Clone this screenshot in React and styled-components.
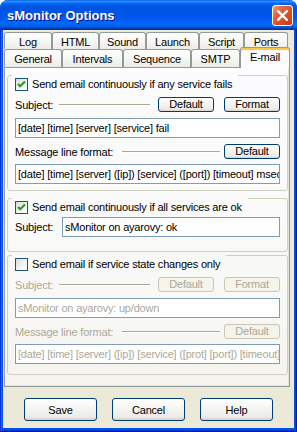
import styled, { createGlobalStyle } from 'styled-components'

const GlobalStyle = createGlobalStyle`
  html, body {
    margin: 0;
    padding: 0;
    background: #ffffff;
  }
  body {
    font-family: "Liberation Sans", Arial, sans-serif;
    font-size: 11px;
    letter-spacing: -0.2px;
    color: #000;
  }
`

// the tab page gradient is pinned to the viewport so covering patches blend in
const pageFill = `
  background: linear-gradient(#fcfcfe 67px, #f8f8f6 300px, #f4f3ee 386px);
  background-attachment: fixed;
`

const Window = styled.div`
  width: 297px;
  height: 432px;
  display: flex;
  flex-direction: column;
  border-radius: 8px 8px 0 0;
  overflow: hidden;
  background: #0054e3;
`

const TitleBar = styled.div`
  flex: none;
  height: 30px;
  display: flex;
  align-items: center;
  justify-content: space-between;
  padding: 0 4px 0 7px;
  box-sizing: border-box;
  background: linear-gradient(180deg, #0058ee 0%, #3593ff 4%, #288eff 6%, #127dff 8%, #036ffc 10%, #0262ee 14%, #0057e5 20%, #0054e3 24%, #0055eb 56%, #005bf5 66%, #026afe 76%, #0062ef 86%, #0052d6 92%, #0040ab 94%, #003092 100%);
`

const Title = styled.span`
  color: #fff;
  font: bold 13px "Liberation Sans", Arial, sans-serif;
  letter-spacing: 0;
  text-shadow: 1px 1px #0f1089;
  padding-top: 1px;
`

const CloseButton = styled.div`
  width: 21px;
  height: 21px;
  box-sizing: border-box;
  border: 1px solid #fff;
  border-radius: 3px;
  background: linear-gradient(135deg, #f4a283 0%, #e5653f 30%, #dc4f24 60%, #c8380f 100%);
  display: flex;
  align-items: center;
  justify-content: center;
  margin-top: 1px;
`

const Frame = styled.div`
  flex: 1;
  display: flex;
  padding: 0 3px 4px 3px;
  box-shadow: inset 1px 0 #0831d9, inset -1px 0 #001ea0, inset 0 -1px #00138c, inset 2px 0 #166aee, inset -2px 0 #003bda, inset 0 -2px #003bda;
`

const Client = styled.div`
  flex: 1;
  background: #ece9d8;
  display: flex;
  flex-direction: column;
  padding-top: 2px;
`

const TabStrip = styled.div`
  display: flex;
  flex-direction: column;
  margin-left: 1px;
`

const TabRow = styled.div`
  display: flex;
  align-items: flex-end;
  height: ${p => p.$h}px;
`

const Tab = styled.div`
  box-sizing: border-box;
  width: ${p => p.$w}px;
  height: ${p => p.$h}px;
  border: 1px solid #919b9c;
  border-bottom: none;
  border-radius: 3px 3px 0 0;
  background: linear-gradient(#ffffff, #f7f7f4 50%, #ecebe6);
  display: flex;
  align-items: center;
  justify-content: center;
  padding-top: 1px;
  white-space: nowrap;

  &.active {
    position: relative;
    z-index: 2;
    height: ${p => p.$h + 3}px;
    margin-bottom: -1px;
    border-top-color: #e68b2c;
    box-shadow: inset 0 2px #ffc73c;
    padding-top: 0;
    padding-bottom: 2px;
    ${pageFill}
  }
`

const Panel = styled.div`
  box-sizing: border-box;
  width: 286px;
  height: 320px;
  margin-left: 1px;
  border: 1px solid #919b9c;
  box-shadow: inset -1px -1px 0 #e6e4da;
  ${pageFill}
  padding: 0 1px 0 2px;
  display: flex;
  flex-direction: column;
`

const Group = styled.div`
  margin-top: ${p => p.$mt}px;
  border: 1px solid #d0d0bf;
  border-radius: 3px;
  padding: 0 7px ${p => p.$pb}px 7px;
  display: flex;
  flex-direction: column;
`

const Caption = styled.label`
  align-self: flex-start;
  margin: -1px 0 0 -3px;
  padding: 3px 6px 2px 3px;
  display: flex;
  align-items: center;
  gap: 4px;
  line-height: 13px;
  white-space: nowrap;
  ${pageFill}
`

const Box = styled.span`
  width: 13px;
  height: 13px;
  box-sizing: border-box;
  border: 1px solid #1c5180;
  background: linear-gradient(135deg, #dcdcd7, #ffffff 85%);
  display: flex;
  align-items: center;
  justify-content: center;
`

const Row = styled.div`
  display: flex;
  align-items: center;
  height: ${p => p.$h || 15}px;
  margin-top: ${p => p.$mt}px;
  white-space: nowrap;
  color: ${p => (p.$off ? '#aca899' : '#000')};
`

const Etch = styled.span`
  flex: none;
  width: ${p => p.$w}px;
  margin-left: ${p => p.$ml}px;
  height: 2px;
  box-sizing: border-box;
  border-top: 1px solid #aca899;
  border-bottom: 1px solid #ffffff;
`

const Buttons = styled.div`
  margin-left: auto;
  display: flex;
  gap: 10px;
`

const SmallButton = styled.div`
  width: 56px;
  height: 15px;
  box-sizing: border-box;
  border: 1px solid ${p => (p.$off ? '#c9c7ba' : '#003c74')};
  border-radius: 3px;
  background: ${p => (p.$off ? '#f5f4ea' : 'linear-gradient(180deg, #fff, #ecebe6 86%, #d6d0c5)')};
  color: ${p => (p.$off ? '#aca899' : '#000')};
  display: flex;
  align-items: center;
  justify-content: center;
  line-height: 13px;
`

const Field = styled.div`
  box-sizing: border-box;
  flex: none;
  height: 20px;
  width: ${p => (p.$w ? `${p.$w}px` : 'auto')};
  margin-top: ${p => p.$mt || 0}px;
  margin-left: ${p => (p.$w ? 'auto' : '0')};
  border: 1px solid #7f9db9;
  background: #fff;
  padding: 0 2px;
  display: flex;
  align-items: center;
  white-space: nowrap;
  overflow: hidden;
  color: ${p => (p.$off ? '#aca899' : '#000')};
`

const Footer = styled.div`
  display: flex;
  justify-content: center;
  gap: 15px;
  margin-top: 11px;
`

const Button = styled.div`
  width: 73px;
  height: 23px;
  box-sizing: border-box;
  border: 1px solid #003c74;
  border-radius: 3px;
  background: linear-gradient(180deg, #fff, #ecebe6 86%, #d6d0c5);
  display: flex;
  align-items: center;
  justify-content: center;
`

const backTabs = [['Log', 48], ['HTML', 47], ['Sound', 47], ['Launch', 53], ['Script', 45], ['Ports', 44]]
const frontTabs = [['General', 58], ['Intervals', 61], ['Sequence', 68], ['SMTP', 49], ['E-mail', 50]]

function Check({ on, children }) {
  return (
    <Caption>
      <Box>
        {on && (
          <svg width="9" height="9" viewBox="0 0 9 9">
            <polyline points="1,4 3.2,6.3 8,1.5" fill="none" stroke="#21a121" strokeWidth="2.2" />
          </svg>
        )}
      </Box>
      {children}
    </Caption>
  )
}

export default function App() {
  return (
    <>
      <GlobalStyle />
      <Window>
        <TitleBar>
          <Title>sMonitor Options</Title>
          <CloseButton>
            <svg width="11" height="11" viewBox="0 0 11 11">
              <path d="M1.2 1.2 L9.8 9.8 M9.8 1.2 L1.2 9.8" stroke="#fff" strokeWidth="2.3" strokeLinecap="square" />
            </svg>
          </CloseButton>
        </TitleBar>
        <Frame>
          <Client>
            <TabStrip>
              <TabRow $h={17}>
                {backTabs.map(([name, w]) => (
                  <Tab key={name} $w={w} $h={17}>{name}</Tab>
                ))}
              </TabRow>
              <TabRow $h={18}>
                {frontTabs.map(([name, w]) => (
                  <Tab key={name} $w={w} $h={18} className={name === 'E-mail' ? 'active' : ''}>{name}</Tab>
                ))}
              </TabRow>
            </TabStrip>
            <Panel>
              <Group $mt={7} $pb={6}>
                <Check on>Send email continuously if any service fails</Check>
                <Row $mt={4}>
                  Subject:
                  <Etch $w={91} $ml={6} />
                  <Buttons>
                    <SmallButton>Default</SmallButton>
                    <SmallButton>Format</SmallButton>
                  </Buttons>
                </Row>
                <Field $mt={6}>[date] [time] [server] [service] fail</Field>
                <Row $mt={6}>
                  Message line format:
                  <Etch $w={98} $ml={9} />
                  <Buttons>
                    <SmallButton>Default</SmallButton>
                  </Buttons>
                </Row>
                <Field $mt={5}>[date] [time] [server] ([ip]) [service] ([port]) [timeout] msec</Field>
              </Group>
              <Group $mt={7} $pb={14}>
                <Check on>Send email continuously if all services are ok</Check>
                <Row $mt={1} $h={20}>
                  Subject:
                  <Field $w={218}>sMonitor on ayarovy: ok</Field>
                </Row>
              </Group>
              <Group $mt={3} $pb={10}>
                <Check>Send email if service state changes only</Check>
                <Row $mt={4} $off>
                  Subject:
                  <Etch $w={91} $ml={6} />
                  <Buttons>
                    <SmallButton $off>Default</SmallButton>
                    <SmallButton $off>Format</SmallButton>
                  </Buttons>
                </Row>
                <Field $mt={6} $off>sMonitor on ayarovy: up/down</Field>
                <Row $mt={6} $off>
                  Message line format:
                  <Etch $w={98} $ml={9} />
                  <Buttons>
                    <SmallButton $off>Default</SmallButton>
                  </Buttons>
                </Row>
                <Field $mt={5} $off>[date] [time] [server] ([ip]) [service] ([prot] [port]) [timeout] msec</Field>
              </Group>
            </Panel>
            <Footer>
              <Button>Save</Button>
              <Button>Cancel</Button>
              <Button>Help</Button>
            </Footer>
          </Client>
        </Frame>
      </Window>
    </>
  )
}
